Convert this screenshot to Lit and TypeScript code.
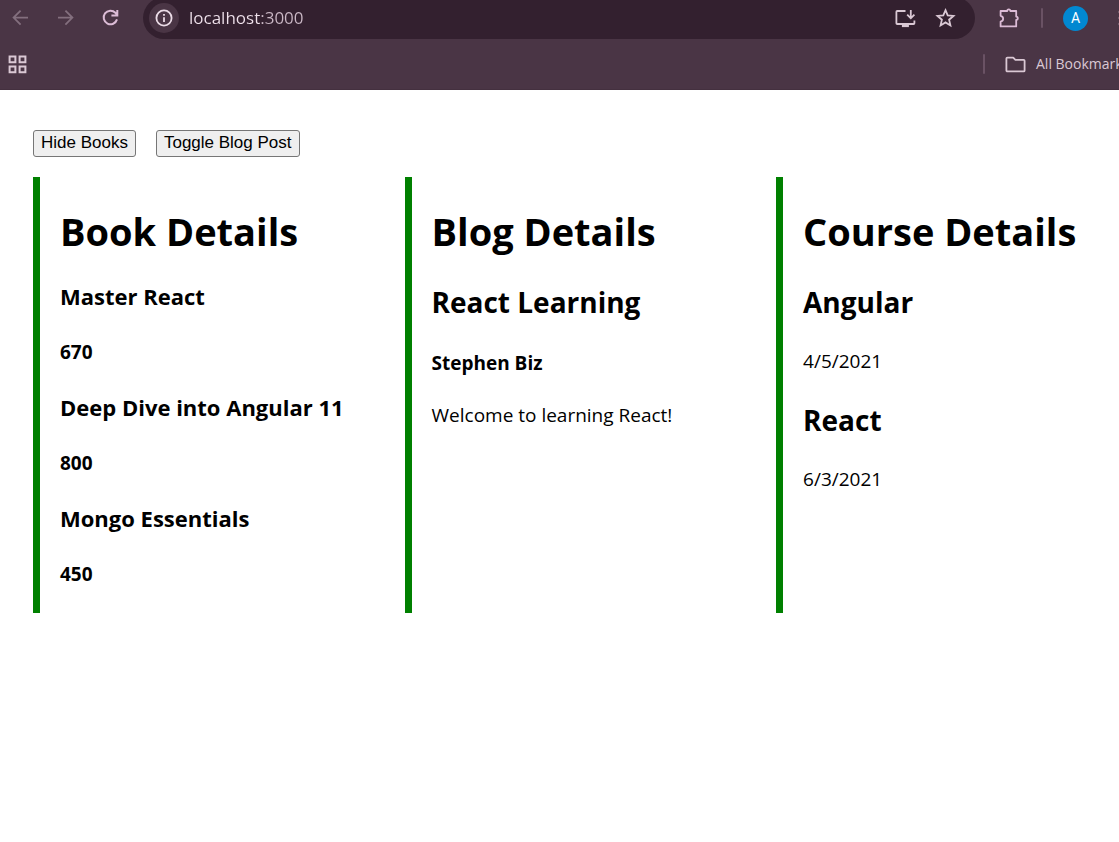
import { LitElement, html, css, nothing } from "lit";
import { customElement, state } from "lit/decorators.js";

interface Book {
  name: string;
  price: number;
}

interface Course {
  name: string;
  date: string;
}

const BOOKS: Book[] = [
  { name: "Master React", price: 670 },
  { name: "Deep Dive into Angular 11", price: 800 },
  { name: "Mongo Essentials", price: 450 },
];

const COURSES: Course[] = [
  { name: "Angular", date: "4/5/2021" },
  { name: "React", date: "6/3/2021" },
];

@customElement("browser-bar")
export class BrowserBar extends LitElement {
  static styles = css`
    :host {
      display: block;
      height: 90px;
      overflow: hidden;
      box-sizing: border-box;
      border-bottom: 1px solid #44303f;
      background: #4a3545;
      color: #dac8d4;
      font-family: "Segoe UI", "Open Sans", "Noto Sans", sans-serif;
    }
    svg {
      display: block;
      flex: none;
    }
    button,
    a {
      display: flex;
      flex: none;
      align-items: center;
      justify-content: center;
      padding: 0;
      border: 0;
      background: none;
      color: inherit;
      text-decoration: none;
      font: inherit;
    }
    .toolbar {
      display: flex;
      align-items: center;
      height: 44px;
      margin-top: -4px;
    }
    .nav {
      display: flex;
      flex: none;
      gap: 21px;
      padding: 0 21px 0 8px;
      color: #dcbcd6;
    }
    .nav button {
      width: 24px;
    }
    .nav button:disabled {
      color: #836f7e;
    }
    .omnibox {
      display: flex;
      flex: 1;
      align-items: center;
      box-sizing: border-box;
      min-width: 0;
      height: 42px;
      padding: 0 18px 0 6px;
      border-radius: 21px;
      background: #33202f;
    }
    .info {
      width: 30px;
      height: 30px;
      border-radius: 50%;
      background: #4a3545;
      color: #eadbe6;
    }
    .url {
      flex: 1;
      min-width: 0;
      padding: 0 0 0 10px;
      border: 0;
      outline: 0;
      background: linear-gradient(90deg, #f0e2ec 81px, #cbb8c6 81px);
      background-clip: text;
      -webkit-background-clip: text;
      color: transparent;
      font: 17px/24px "Segoe UI", "Open Sans", "Noto Sans", sans-serif;
    }
    .omni-actions {
      display: flex;
      gap: 16px;
    }
    .tools {
      display: flex;
      flex: none;
      align-items: center;
      box-sizing: border-box;
      width: 144px;
      padding-left: 22px;
      overflow: hidden;
    }
    .divider {
      flex: none;
      width: 2px;
      height: 20px;
      border-radius: 1px;
      background: #6a5264;
    }
    .tools .divider {
      margin: 0 20px;
    }
    .ext {
      color: #dcbcd6;
    }
    .avatar {
      width: 25px;
      height: 25px;
      border-radius: 50%;
      background: #0288d1;
      color: #fff;
      font: 14px/25px Roboto, sans-serif;
    }
    .menu {
      padding-left: 30px;
    }
    .bookmarks {
      display: flex;
      align-items: center;
      justify-content: space-between;
      height: 48px;
      padding-left: 8px;
    }
    .all {
      display: flex;
      align-items: center;
      width: 136px;
      overflow: hidden;
      gap: 20px;
    }
    .folder {
      gap: 9px;
      white-space: nowrap;
      font-size: 14px;
      line-height: 24px;
    }
  `;

  render() {
    return html`
      <div class="toolbar">
        <div class="nav">
          <button aria-label="Back" disabled>
            <svg width="24" height="24" viewBox="0 0 24 24" fill="none" stroke="currentColor" stroke-width="1.8">
              <path d="M20 11.6H6M12.6 4.6L5.6 11.6L12.6 18.6" />
            </svg>
          </button>
          <button aria-label="Forward" disabled>
            <svg width="24" height="24" viewBox="0 0 24 24" fill="none" stroke="currentColor" stroke-width="1.8">
              <path d="M5 11.6H19M12.4 4.6L19.4 11.6L12.4 18.6" />
            </svg>
          </button>
          <button aria-label="Reload">
            <svg width="24" height="24" viewBox="0 0 24 24" fill="none" stroke="currentColor" stroke-width="2">
              <path d="M19 13.4A6.8 6.8 0 1 1 17.4 6.8L19.4 9M19.3 4V9.6H13.4" />
            </svg>
          </button>
        </div>
        <div class="omnibox">
          <button class="info" aria-label="Site information">
            <svg width="20" height="20" viewBox="0 0 20 20" fill="none" stroke="currentColor" stroke-width="1.8">
              <circle cx="10" cy="10" r="7.6" />
              <path d="M10 9.2V14M10 6V7.8" />
            </svg>
          </button>
          <input class="url" type="text" aria-label="Address" value="localhost:3000" spellcheck="false" />
          <div class="omni-actions">
            <button aria-label="Install app">
              <svg width="24" height="24" viewBox="0 0 24 24" fill="none" stroke="currentColor" stroke-width="1.8">
                <path d="M12.5 5H4.2Q3.4 5 3.4 5.8V17.2Q3.4 18 4.2 18H20.6Q21.4 18 21.4 17.2V14.5" />
                <path d="M17.8 4V12M14.2 8.6L17.8 12.3L21.4 8.6" />
                <path d="M8.9 19.8H15.9" stroke-width="2.6" />
              </svg>
            </button>
            <button aria-label="Bookmark this tab">
              <svg width="24" height="24" viewBox="0 0 24 24" fill="none" stroke="currentColor" stroke-width="1.8">
                <path d="M12.5 4.2L14.7 9.4L20.5 9.9L16.1 13.7L17.4 19.4L12.5 16.4L7.6 19.4L8.9 13.7L4.5 9.9L10.3 9.4Z" />
              </svg>
            </button>
          </div>
        </div>
        <div class="tools">
          <button class="ext" aria-label="Extensions">
            <svg width="24" height="24" viewBox="0 0 24 24" fill="none" stroke="currentColor" stroke-width="1.8" stroke-linejoin="round">
              <path d="M3.6 5H10.2A1.6 1.6 0 0 1 13.4 5H19.2V10.6A1.6 1.6 0 0 1 19.2 13.8V20.4H3.6V15.6C7 15 7 10.4 3.6 9.8Z" />
            </svg>
          </button>
          <span class="divider"></span>
          <button class="avatar" aria-label="Profile">A</button>
          <button class="menu" aria-label="Menu">
            <svg width="5" height="20" viewBox="0 0 5 20" fill="currentColor">
              <circle cx="2.5" cy="4" r="1.8" />
              <circle cx="2.5" cy="10" r="1.8" />
              <circle cx="2.5" cy="16" r="1.8" />
            </svg>
          </button>
        </div>
      </div>
      <div class="bookmarks">
        <button aria-label="Apps">
          <svg width="20" height="20" viewBox="0 0 20 20" fill="none" stroke="currentColor" stroke-width="2">
            <path d="M1.6 2.4H7.4V8.2H1.6ZM11.6 2.4H17.4V8.2H11.6ZM1.6 12.4H7.4V18.2H1.6ZM11.6 12.4H17.4V18.2H11.6Z" />
          </svg>
        </button>
        <div class="all">
          <span class="divider"></span>
          <a class="folder" href="#">
            <svg width="22" height="18" viewBox="0 0 22 18" fill="none" stroke="currentColor" stroke-width="1.8" stroke-linejoin="round">
              <path d="M2.4 2.6H8.2L10.4 4.8H18.6Q19.6 4.8 19.6 5.8V15.4Q19.6 16.4 18.6 16.4H2.4Q1.4 16.4 1.4 15.4V3.6Q1.4 2.6 2.4 2.6Z" />
            </svg>
            All Bookmarks
          </a>
        </div>
      </div>
    `;
  }
}

@customElement("app-root")
export class AppRoot extends LitElement {
  static styles = css`
    :host {
      display: block;
      min-height: 100vh;
      background: #fff;
      color: #000;
      font-family: "Segoe UI", "Open Sans", "Noto Sans", sans-serif;
    }
    .page {
      padding: 40px 0 40px 33px;
    }
    .actions {
      display: flex;
      gap: 20px;
      margin-bottom: 20px;
    }
    .actions button {
      box-sizing: border-box;
      height: 27px;
      padding: 0 7px 2px;
      border: 1px solid #767676;
      border-radius: 3px;
      background: #efefef;
      color: #000;
      font: 17px/22px "Liberation Sans", Arial, sans-serif;
    }
    .columns {
      display: grid;
      grid-template-columns: 13fr 13fr 12fr;
    }
    .column {
      min-width: 0;
      padding: 0 0 0 20px;
      border-left: 7px solid #008000;
    }
    h1 {
      margin: 28px 0 23px;
      font-size: 38px;
      line-height: 52px;
    }
    h2 {
      margin: 25px 0;
      font-size: 28px;
      line-height: 41px;
    }
    h3 {
      margin: 23px 0;
      font-size: 22px;
      line-height: 32px;
    }
    h4 {
      margin: 27px 0 25px;
      font-size: 19px;
      line-height: 27px;
    }
    p {
      margin: 20px 0;
      font-size: 19px;
      line-height: 27px;
    }
  `;

  @state() private showBooks = true;
  @state() private showBlog = true;

  render() {
    return html`
      <browser-bar></browser-bar>
      <main class="page">
        <div class="actions">
          <button @click=${() => (this.showBooks = !this.showBooks)}>
            ${this.showBooks ? "Hide Books" : "Show Books"}
          </button>
          <button @click=${() => (this.showBlog = !this.showBlog)}>Toggle Blog Post</button>
        </div>
        <div class="columns">
          ${this.showBooks
            ? html`<section class="column">
                <h1>Book Details</h1>
                ${BOOKS.map((b) => html`<h3>${b.name}</h3><h4>${b.price}</h4>`)}
              </section>`
            : nothing}
          ${this.showBlog
            ? html`<section class="column">
                <h1>Blog Details</h1>
                <h2>React Learning</h2>
                <h4>Stephen Biz</h4>
                <p>Welcome to learning React!</p>
              </section>`
            : nothing}
          <section class="column">
            <h1>Course Details</h1>
            ${COURSES.map((c) => html`<h2>${c.name}</h2><p>${c.date}</p>`)}
          </section>
        </div>
      </main>
    `;
  }
}
